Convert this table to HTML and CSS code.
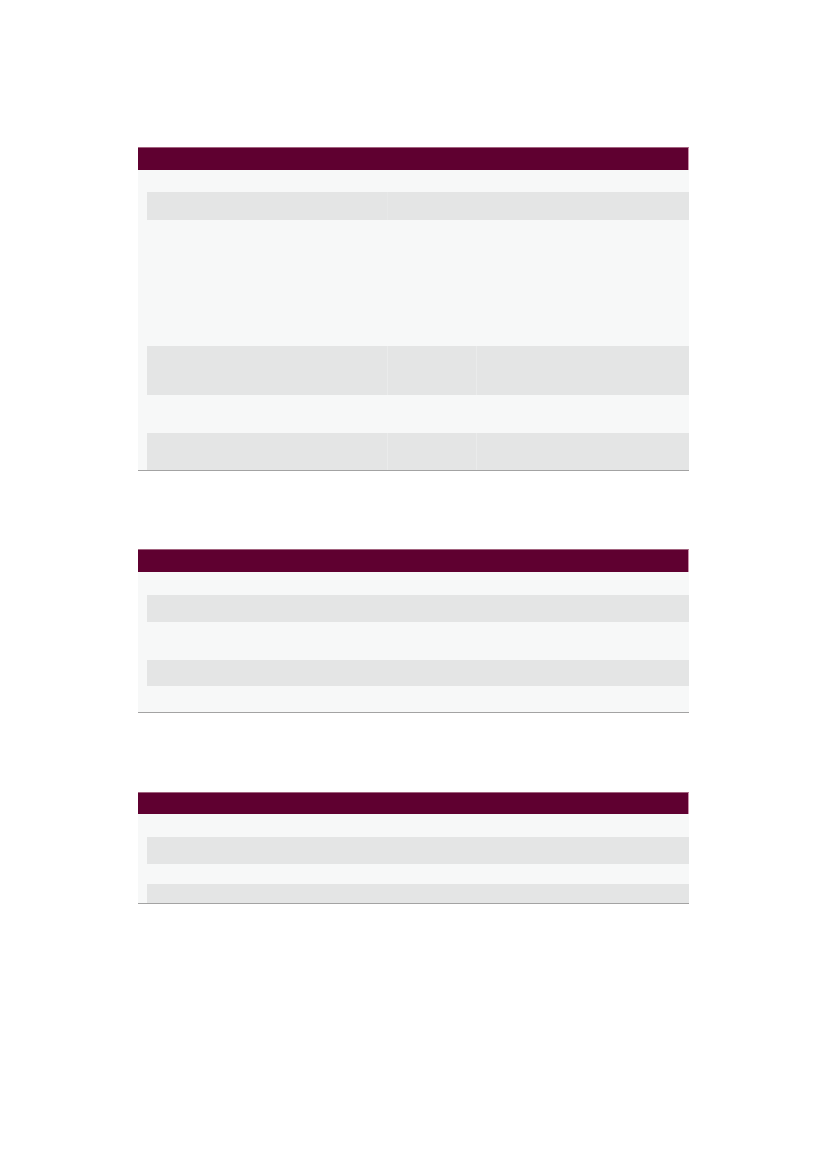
FILE: index.html
```html
<!DOCTYPE html>
<html>
<head>
<meta charset="utf-8">
<link rel="stylesheet" href="styles.css">
</head>
<body>
<div class="page">
  <div class="table t1">
    <div class="head"></div>
    <div class="row light h22"><div></div><div></div><div></div><div></div></div>
    <div class="row gray h28"><div class="pad"></div><div class="c"></div><div class="c f"></div><div class="c"></div></div>
    <div class="row light h126"><div></div><div></div><div></div><div></div></div>
    <div class="row gray h49"><div class="pad"></div><div class="c"></div><div class="c d"></div><div class="c d"></div></div>
    <div class="row light h38"><div></div><div></div><div></div><div></div></div>
    <div class="row gray h37"><div class="pad"></div><div class="c"></div><div class="c d"></div><div class="c d"></div></div>
  </div>

  <div class="table t2">
    <div class="head"></div>
    <div class="row light h23"><div></div><div></div><div></div><div></div></div>
    <div class="row gray h27"><div class="pad"></div><div class="c"></div><div class="c"></div><div class="c"></div></div>
    <div class="row light h38"><div></div><div></div><div></div><div></div></div>
    <div class="row gray h26"><div class="pad"></div><div class="c"></div><div class="c"></div><div class="c"></div></div>
    <div class="row light h26"><div></div><div></div><div></div><div></div></div>
  </div>

  <div class="table t3">
    <div class="head h22h"></div>
    <div class="row light h23"><div></div><div></div><div></div><div></div></div>
    <div class="row gray h27"><div class="pad"></div><div class="c"></div><div class="c"></div><div class="c"></div></div>
    <div class="row light h20"><div></div><div></div><div></div><div></div></div>
    <div class="row gray h19"><div class="pad"></div><div class="c"></div><div class="c"></div><div class="c"></div></div>
  </div>
</div>
</body>
</html>
```
FILE: styles.css
```css
html, body {
  margin: 0;
  padding: 0;
  background: #ffffff;
  font-family: "Liberation Sans", Arial, sans-serif;
}
.page {
  display: flex;
  flex-direction: column;
  padding: 147px 0 0 138px;
  gap: 78px;
}
.t3 { margin-top: 1px; }
.table {
  width: 551px;
  display: flex;
  flex-direction: column;
  border-bottom: 1px solid #a3a3a3;
  background: #f7f8f8;
}
.head {
  height: 22px;
  background: #5f0030;
  border-top: 1px solid #a2637f;
  border-right: 1px solid #c890aa;
  box-sizing: content-box;
  width: 550px;
}
.head.h22h { height: 21px; }
.row {
  display: grid;
  grid-template-columns: 9px 240px 89px 213px;
}
.row.light { background: #f7f8f8; }
.row.gray .pad { background: #f7f8f8; }
.row.gray .c { background: #e4e5e5; }
.row.gray .c.d { box-shadow: inset 1px 0 0 #eaebeb; }
.row.gray .c.f { box-shadow: inset 1px 0 0 #e7e8e8; }
.h19 { height: 19px; }
.h20 { height: 20px; }
.h22 { height: 22px; }
.h23 { height: 23px; }
.h26 { height: 26px; }
.h27 { height: 27px; }
.h28 { height: 28px; }
.h37 { height: 37px; }
.h38 { height: 38px; }
.h49 { height: 49px; }
.h126 { height: 126px; }
```
